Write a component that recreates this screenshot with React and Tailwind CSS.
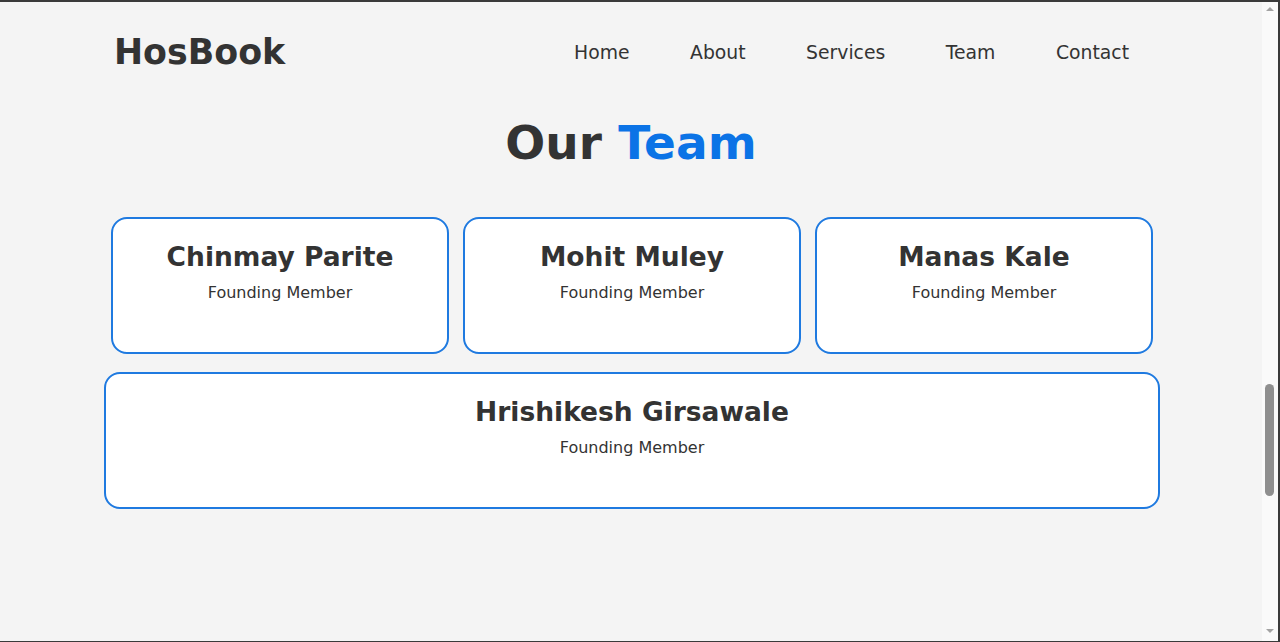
export default function App() {
  const font = { fontFamily: '"DejaVu Sans", Verdana, sans-serif' };
  const members = ["Chinmay Parite", "Mohit Muley", "Manas Kale"];
  return (
    <div className="w-[1280px] h-[642px] bg-[#3a3a3a] pt-[2px] pr-[2px] pb-[1px] overflow-hidden" style={font}>
      <div className="flex h-full">
        <div className="flex-1 bg-[#f4f4f4] text-[#333]">
          <header className="flex items-center justify-between h-[102px] pb-[2px] pl-[114px] pr-[133px]">
            <div className="text-[34.8px] font-bold leading-none">HosBook</div>
            <nav className="flex gap-[60.5px] text-[18.8px] leading-none pt-[2px]">
              <span>Home</span>
              <span>About</span>
              <span>Services</span>
              <span>Team</span>
              <span>Contact</span>
            </nav>
          </header>
          <h2 className="text-center text-[47px] font-bold leading-none pt-[15px]">
            Our <span className="text-[#0b73e6]">Team</span>
          </h2>
          <div className="flex flex-col items-center gap-[18px] mt-[51px] pl-[2px]">
            <div className="flex gap-[14px]">
              {members.map((m) => (
                <Card key={m} name={m} className="w-[338px]" />
              ))}
            </div>
            <Card name="Hrishikesh Girsawale" className="w-[1056px]" />
          </div>
        </div>
        <div className="w-[16px] bg-[#fafafa] relative">
          <div className="absolute top-[5px] left-[4px] w-0 h-0 border-l-[4px] border-r-[4px] border-b-[4px] border-l-transparent border-r-transparent border-b-[#a3a3a3]" />
          <div className="absolute top-[382px] left-[3px] w-[9px] h-[112px] rounded-full bg-[#8f8f8f]" />
          <div className="absolute bottom-[8px] left-[4px] w-0 h-0 border-l-[4px] border-r-[4px] border-t-[4px] border-l-transparent border-r-transparent border-t-[#a3a3a3]" />
        </div>
      </div>
    </div>
  );
}

function Card({ name, className }) {
  return (
    <div className={"h-[137px] bg-white border-2 border-[#1f7ae0] rounded-[16px] flex flex-col items-center pt-[22px] " + className}>
      <div className="text-[26.5px] font-bold leading-[31px]">{name}</div>
      <div className="text-[16px] leading-[19px] mt-[11px]">Founding Member</div>
    </div>
  );
}
